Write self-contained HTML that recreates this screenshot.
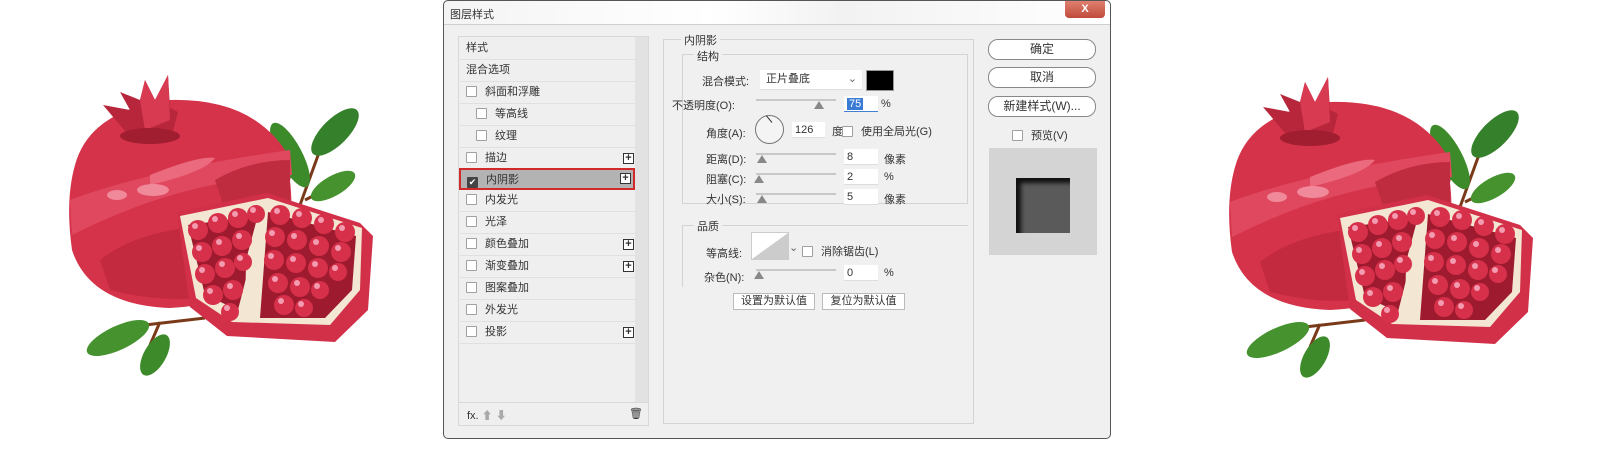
<!DOCTYPE html>
<html><head><meta charset="utf-8"><style>
*{box-sizing:border-box;margin:0;padding:0}
body{width:1608px;height:450px;background:#fff;position:relative;overflow:hidden;font-family:"Liberation Sans","Noto Sans CJK SC",sans-serif;font-size:11px;color:#333}
.a{position:absolute}
.dlg{left:443px;top:0;width:668px;height:439px;background:#f0f0f0;border:1px solid #555;border-radius:5px}
.title{left:0;top:0;width:666px;height:24px;background:linear-gradient(90deg,#f4f4f4,#fff 40%,#f2f2f2 60%,#fff);border-bottom:1px solid #cfcfcf;border-radius:5px 5px 0 0}
.list{left:14px;top:35px;width:191px;height:390px;border:1px solid #d8d8d8;background:#efefef}
.row{position:absolute;left:1px;width:184px;height:22px;border-bottom:1px solid #e0e0e0;line-height:21px;padding-left:6px}
.cb{display:inline-block;width:11px;height:11px;border:1px solid #a0a0a0;background:#fff;vertical-align:-2px;margin-right:8px;border-radius:1px}
.plus{position:absolute;right:10px;top:5px;width:11px;height:11px;border:1px solid #333;font-size:11px;line-height:8px;text-align:center;font-weight:bold;background:#fff}
.grp{border:1px solid #d4d4d4}
.inp{position:absolute;height:16px;background:#fff;border-bottom:1px solid #ddd;padding-left:3px;line-height:16px}
.sl{position:absolute;height:2px;background:#c8c8c8}
.tri{position:absolute;width:0;height:0;border-left:5px solid transparent;border-right:5px solid transparent;border-bottom:8px solid #888}
.btn{position:absolute;left:544px;width:108px;height:21px;border:1px solid #888;border-radius:10px;background:#fff;text-align:center;line-height:19px;font-size:12px}
.b2{position:absolute;height:17px;border:1px solid #bbb;background:#fff;text-align:center;line-height:15px}
</style></head><body>

<svg class="a" style="left:0;top:0" width="1608" height="450">
<defs>
<g id="pg">
 <path d="M287 190 L292 160 M300 205 L320 150 M305 200 L335 185" stroke="#7a3a1a" stroke-width="3" fill="none"/>
 <ellipse cx="290" cy="155" rx="36" ry="12" transform="rotate(62 290 155)" fill="#3d8a2a"/>
 <ellipse cx="335" cy="132" rx="31" ry="13" transform="rotate(-45 335 132)" fill="#35802a"/>
 <ellipse cx="333" cy="186" rx="25" ry="10" transform="rotate(-30 333 186)" fill="#45922e"/>
 <path d="M145 325 L205 318 M160 322 L150 345" stroke="#7a3a1a" stroke-width="3" fill="none"/>
 <ellipse cx="118" cy="338" rx="34" ry="12" transform="rotate(-25 118 338)" fill="#45922e"/>
 <ellipse cx="155" cy="355" rx="23" ry="11" transform="rotate(-60 155 355)" fill="#3d8a2a"/>
 <path d="M75 165 Q90 110 170 100 Q250 98 285 150 Q300 220 280 265 Q240 305 170 308 Q90 305 72 250 Q65 200 75 165Z" fill="#d5334a"/>
 <path d="M70 200 Q150 170 290 150 L292 175 Q180 180 72 235Z" fill="#e0485f"/>
 <path d="M100 260 Q140 228 220 225 L250 290 Q180 308 110 290Z" fill="#c32a40"/>
 <path d="M215 180 Q250 160 290 160 L290 230 L230 225Z" fill="#c02c3f"/>
 <path d="M150 175 Q200 155 215 158 Q205 172 150 185Z" fill="#eb6a7e"/>
 <ellipse cx="117" cy="195" rx="10" ry="5" fill="#f08a9a"/>
 <ellipse cx="153" cy="190" rx="16" ry="6" fill="#f08a9a"/>
 <path d="M103 105 L130 110 L120 92 L140 100 L145 80 L155 100 L168 75 L170 108 L178 112 L172 135 L130 137Z" fill="#b8263b"/>
 <path d="M140 100 L145 80 L155 100 L168 75 L170 120 L145 130Z" fill="#d83a52"/>
 <ellipse cx="150" cy="136" rx="30" ry="8" fill="#a11d30"/>
 <path d="M177 212 L267 193 L360 223 L373 236 L368 310 L335 342 L227 336 L190 307Z" fill="#d23048"/>
 <path d="M180 216 L268 198 L362 228 L360 290 L330 325 L232 322 L196 298Z" fill="#f3e6d3"/>
 <path d="M188 225 L262 215 L238 310 L205 295Z" fill="#9e1a2e"/>
 <path d="M268 212 L356 236 L352 290 L325 318 L260 318 Z" fill="#9e1a2e"/>
 <path d="M262 200 L270 200 L255 260 L258 320 L245 320 L246 260Z" fill="#f3e6d3"/>
 <g fill="#d6304a">
  <circle cx="198" cy="230" r="10"/><circle cx="218" cy="223" r="10"/><circle cx="238" cy="218" r="10"/><circle cx="256" cy="214" r="9"/>
  <circle cx="202" cy="252" r="10"/><circle cx="222" cy="246" r="10"/><circle cx="242" cy="240" r="10"/>
  <circle cx="205" cy="274" r="10"/><circle cx="225" cy="268" r="10"/><circle cx="243" cy="262" r="9"/>
  <circle cx="213" cy="295" r="10"/><circle cx="233" cy="290" r="10"/><circle cx="230" cy="312" r="9"/>
  <circle cx="280" cy="215" r="10"/><circle cx="302" cy="218" r="10"/><circle cx="324" cy="224" r="10"/><circle cx="345" cy="232" r="10"/>
  <circle cx="275" cy="237" r="10"/><circle cx="297" cy="240" r="10"/><circle cx="319" cy="246" r="10"/><circle cx="341" cy="252" r="10"/>
  <circle cx="274" cy="260" r="10"/><circle cx="296" cy="263" r="10"/><circle cx="318" cy="268" r="10"/><circle cx="338" cy="272" r="9"/>
  <circle cx="278" cy="283" r="10"/><circle cx="300" cy="287" r="10"/><circle cx="320" cy="290" r="9"/>
  <circle cx="284" cy="305" r="10"/><circle cx="304" cy="308" r="9"/>
 </g>
 <g fill="#f39bb0">
  <circle cx="195" cy="226" r="3"/><circle cx="215" cy="219" r="3"/><circle cx="235" cy="214" r="3"/><circle cx="253" cy="210" r="3"/>
  <circle cx="199" cy="248" r="3"/><circle cx="219" cy="242" r="3"/><circle cx="239" cy="236" r="3"/>
  <circle cx="202" cy="270" r="3"/><circle cx="222" cy="264" r="3"/><circle cx="240" cy="258" r="3"/>
  <circle cx="210" cy="291" r="3"/><circle cx="230" cy="286" r="3"/><circle cx="227" cy="308" r="3"/>
  <circle cx="277" cy="211" r="3"/><circle cx="299" cy="214" r="3"/><circle cx="321" cy="220" r="3"/><circle cx="342" cy="228" r="3"/>
  <circle cx="272" cy="233" r="3"/><circle cx="294" cy="236" r="3"/><circle cx="316" cy="242" r="3"/><circle cx="338" cy="248" r="3"/>
  <circle cx="271" cy="256" r="3"/><circle cx="293" cy="259" r="3"/><circle cx="315" cy="264" r="3"/><circle cx="335" cy="268" r="3"/>
  <circle cx="275" cy="279" r="3"/><circle cx="297" cy="283" r="3"/><circle cx="317" cy="286" r="3"/>
  <circle cx="281" cy="301" r="3"/><circle cx="301" cy="304" r="3"/>
 </g>
</g>
</defs>
<use href="#pg"/>
<use href="#pg" transform="translate(1160,2)"/>
</svg>

<div class="a dlg">
 <div class="a title"><span class="a" style="left:6px;top:5px">图层样式</span>
  <div class="a" style="left:621px;top:0;width:40px;height:17px;background:linear-gradient(#e08070,#c04a3a);border-radius:0 0 4px 4px;color:#fff;text-align:center;font-weight:bold;line-height:16px">X</div>
 </div>
 <div class="a list">
  <div class="row" style="top:1px">样式</div>
  <div class="row" style="top:23px">混合选项</div>
  <div class="row" style="top:45px"><span class="cb"></span>斜面和浮雕</div>
  <div class="row" style="top:67px;padding-left:16px"><span class="cb"></span>等高线</div>
  <div class="row" style="top:89px;padding-left:16px"><span class="cb"></span>纹理</div>
  <div class="row" style="top:111px"><span class="cb"></span>描边<span class="plus">+</span></div>
  <div class="row" style="top:131px;height:22px;background:#b3b3b3;border:2px solid #d02a2a;left:0;width:176px"><span class="cb" style="background:#444;border-color:#444;color:#fff;font-size:9px;line-height:9px;text-align:center">✔</span>内阴影<span class="plus" style="right:2px;top:3px">+</span></div>
  <div class="row" style="top:153px"><span class="cb"></span>内发光</div>
  <div class="row" style="top:175px"><span class="cb"></span>光泽</div>
  <div class="row" style="top:197px"><span class="cb"></span>颜色叠加<span class="plus">+</span></div>
  <div class="row" style="top:219px"><span class="cb"></span>渐变叠加<span class="plus">+</span></div>
  <div class="row" style="top:241px"><span class="cb"></span>图案叠加</div>
  <div class="row" style="top:263px"><span class="cb"></span>外发光</div>
  <div class="row" style="top:285px"><span class="cb"></span>投影<span class="plus">+</span></div>
  <div class="a" style="left:176px;top:0;width:13px;height:365px;background:#e2e2e2"></div>
  <div class="a" style="left:0;top:365px;width:189px;height:1px;background:#d8d8d8"></div>
  <span class="a" style="left:8px;top:370px">fx. <span style="color:#aaa">⬆ ⬇</span></span>
  <span class="a" style="left:170px;top:370px">🗑</span>
 </div>

 <div class="a grp" style="left:219px;top:38px;width:311px;height:385px"></div>
 <span class="a" style="left:237px;top:31px;background:#f0f0f0;padding:0 3px">内阴影</span>
 <div class="a grp" style="left:238px;top:53px;width:286px;height:150px"></div>
 <span class="a" style="left:250px;top:47px;background:#f0f0f0;padding:0 3px">结构</span>
 <span class="a" style="left:258px;top:72px">混合模式:</span>
 <div class="inp" style="left:316px;top:69px;width:102px;height:20px;line-height:19px;padding-left:6px">正片叠底<span style="position:absolute;right:5px;color:#666">⌄</span></div>
 <div class="a" style="left:422px;top:69px;width:28px;height:21px;background:#000;border:1px solid #999"></div>
 <span class="a" style="left:228px;top:96px">不透明度(O):</span>
 <div class="sl" style="left:312px;top:98px;width:80px"></div><div class="tri" style="left:370px;top:100px"></div>
 <div class="inp" style="left:400px;top:95px;width:34px;border-bottom:1px solid #4080d0"><span style="background:#3a7bd5;color:#fff;padding:0 2px">75</span></div>
 <span class="a" style="left:437px;top:97px">%</span>
 <span class="a" style="left:262px;top:124px">角度(A):</span>
 <div class="a" style="left:311px;top:114px;width:29px;height:29px;border:1px solid #777;border-radius:50%;background:#f4f4f4"><div class="a" style="left:7px;top:6px;width:9px;height:1px;background:#333;transform:rotate(50deg);transform-origin:right"></div></div>
 <div class="inp" style="left:348px;top:121px;width:33px">126</div>
 <span class="a" style="left:388px;top:122px">度</span>
 <span class="a" style="left:398px;top:122px"><span class="cb"></span>使用全局光(G)</span>
 <span class="a" style="left:262px;top:150px">距离(D):</span>
 <div class="sl" style="left:312px;top:152px;width:80px"></div><div class="tri" style="left:313px;top:154px"></div>
 <div class="inp" style="left:400px;top:148px;width:34px">8</div><span class="a" style="left:440px;top:150px">像素</span>
 <span class="a" style="left:262px;top:170px">阻塞(C):</span>
 <div class="sl" style="left:312px;top:172px;width:80px"></div><div class="tri" style="left:310px;top:174px"></div>
 <div class="inp" style="left:400px;top:168px;width:34px">2</div><span class="a" style="left:440px;top:170px">%</span>
 <span class="a" style="left:262px;top:190px">大小(S):</span>
 <div class="sl" style="left:312px;top:192px;width:80px"></div><div class="tri" style="left:313px;top:194px"></div>
 <div class="inp" style="left:400px;top:188px;width:34px">5</div><span class="a" style="left:440px;top:190px">像素</span>

 <div class="a grp" style="left:238px;top:224px;width:286px;height:62px;border-right:none;border-bottom:none"></div>
 <span class="a" style="left:250px;top:217px;background:#f0f0f0;padding:0 3px">品质</span>
 <span class="a" style="left:262px;top:244px">等高线:</span>
 <div class="a" style="left:307px;top:231px;width:38px;height:28px;border:1px solid #ccc;background:linear-gradient(to top left,#ccc 50%,#fff 50%)"></div>
 <span class="a" style="left:345px;top:240px;color:#666">⌄</span>
 <span class="a" style="left:358px;top:242px"><span class="cb"></span>消除锯齿(L)</span>
 <span class="a" style="left:260px;top:268px">杂色(N):</span>
 <div class="sl" style="left:312px;top:268px;width:80px"></div><div class="tri" style="left:310px;top:270px"></div>
 <div class="inp" style="left:400px;top:264px;width:34px">0</div><span class="a" style="left:440px;top:266px">%</span>
 <div class="b2" style="left:289px;top:292px;width:82px">设置为默认值</div>
 <div class="b2" style="left:378px;top:292px;width:83px">复位为默认值</div>

 <div class="btn" style="top:38px">确定</div>
 <div class="btn" style="top:66px">取消</div>
 <div class="btn" style="top:95px">新建样式(W)...</div>
 <span class="a" style="left:568px;top:126px"><span class="cb"></span>预览(V)</span>
 <div class="a" style="left:545px;top:147px;width:108px;height:107px;background:#d4d4d4"></div>
 <div class="a" style="left:572px;top:177px;width:54px;height:55px;background:#5a5a5a;box-shadow:inset 5px 5px 4px #111"></div>
</div>
</body></html>
